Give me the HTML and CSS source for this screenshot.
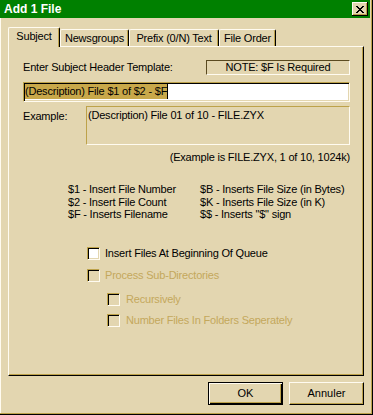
FILE: index.html
```html
<!DOCTYPE html>
<html lang="fr">
<head>
    <meta charset="UTF-8">
    <meta name="viewport" content="width=device-width, initial-scale=1.0">
    <title>Add 1 File</title>
    <link rel="stylesheet" href="styles.css">
</head>
<body>
    <div class="fenetre">
        <div class="titre">
            <span class="titre-texte">Add 1 File</span>
            <button class="fermer" type="button">
                <svg width="8" height="7" viewBox="0 0 8 7" shape-rendering="crispEdges">
                    <path fill="#000" d="M0 0h2v1h-2z M6 0h2v1h-2z M1 1h2v1h-2z M5 1h2v1h-2z M2 2h4v1h-4z M3 3h2v1h-2z M2 4h4v1h-4z M1 5h2v1h-2z M5 5h2v1h-2z M0 6h2v1h-2z M6 6h2v1h-2z"/>
                </svg>
            </button>
        </div>

        <div class="contenu">
            <!-- Onglets -->
            <div class="onglets">
                <div class="onglet actif onglet-subject">Subject</div>
                <div class="onglet onglet-news">Newsgroups</div>
                <div class="onglet onglet-prefix">Prefix (0/N) Text</div>
                <div class="onglet onglet-ordre">File Order</div>
            </div>

            <div class="panneau">
                <div class="ligne-modele">
                    <span>Enter Subject Header Template:</span>
                    <span class="note">NOTE: $F Is Required</span>
                </div>

                <div class="champ"><span class="selection">(Description) File $1 of $2 - $F</span><span class="curseur"></span></div>

                <div class="ligne-exemple">
                    <span class="etiquette-exemple">Example:</span>
                    <div class="boite-exemple">(Description) File 01 of 10 - FILE.ZYX</div>
                </div>
                <div class="note-exemple">(Example is FILE.ZYX, 1 of 10, 1024k)</div>

                <!-- Aide pour les variables -->
                <div class="aide">
                    <span>$1 - Insert File Number</span>
                    <span>$B - Inserts File Size (in Bytes)</span>
                    <span>$2 - Insert File Count</span>
                    <span>$K - Inserts File Size (in K)</span>
                    <span>$F - Inserts Filename</span>
                    <span>$$ - Inserts "$" sign</span>
                </div>

                <label class="case case-1">
                    <span class="boite"></span>
                    <span>Insert Files At Beginning Of Queue</span>
                </label>
                <label class="case case-2 inactif">
                    <span class="boite"></span>
                    <span>Process Sub-Directories</span>
                </label>
                <label class="case case-3 inactif sous">
                    <span class="boite"></span>
                    <span>Recursively</span>
                </label>
                <label class="case case-4 inactif sous">
                    <span class="boite"></span>
                    <span>Number Files In Folders Seperately</span>
                </label>
            </div>

            <div class="boutons">
                <button class="bouton defaut" type="button">OK</button>
                <button class="bouton" type="button">Annuler</button>
            </div>
        </div>
    </div>
</body>
</html>
```

FILE: styles.css
```css
body {
    margin: 0;
    background-color: #e3d6b0;
    font-family: "Liberation Sans", Arial, sans-serif;
    font-size: 11px;
    letter-spacing: -0.2px;
    line-height: 13px;
    color: #000;
}

.fenetre {
    width: 373px;
    height: 415px;
    box-sizing: border-box;
    border-right: 1px solid #000;
    border-bottom: 1px solid #000;
    box-shadow: inset -1px -1px #bda24a, inset 1px 0 #fffbf0;
    padding-right: 2px;
}

/* Barre de titre */
.titre {
    height: 18px;
    background-color: #008000;
    display: flex;
    align-items: center;
    justify-content: space-between;
    padding: 0 2px 0 4px;
}

.titre-texte {
    color: #fff;
    font-weight: bold;
    font-size: 12px;
    letter-spacing: 0;
    padding-top: 1px;
}

.fermer {
    width: 16px;
    height: 14px;
    padding: 0;
    border: none;
    background-color: #e3d6b0;
    box-shadow: inset -1px -1px #000, inset 1px 1px #fffbf0, inset -2px -2px #bda24a;
    display: flex;
    align-items: center;
    justify-content: center;
}

.contenu {
    padding: 9px 0 0 8px;
}

/* Onglets */
.onglets {
    display: flex;
    align-items: flex-end;
    height: 20px;
    margin-bottom: -1px;
    position: relative;
    z-index: 1;
}

.onglet {
    box-sizing: border-box;
    height: 17px;
    margin-bottom: 1px;
    padding-top: 2px;
    text-align: center;
    border-left: 1px solid #fffbf0;
    border-top: 1px solid #fffbf0;
    border-right: 1px solid #000;
    border-radius: 2px 2px 0 0;
    box-shadow: inset -1px 0 #bda24a;
    background-color: #e3d6b0;
}

.onglet.actif {
    height: 20px;
    margin-bottom: 0;
}

.onglet-subject { width: 52px; }
.onglet-news { width: 69px; }
.onglet-prefix { width: 90px; }
.onglet-ordre { width: 57px; }

/* Panneau */
.panneau {
    width: 356px;
    height: 330px;
    box-sizing: border-box;
    border-left: 1px solid #fffbf0;
    border-top: 1px solid #fffbf0;
    border-right: 1px solid #000;
    border-bottom: 1px solid #000;
    box-shadow: inset -1px -1px #bda24a;
    padding: 13px 13px 0 14px;
}

.ligne-modele {
    display: flex;
    justify-content: space-between;
    align-items: center;
    height: 15px;
}

.note {
    width: 144px;
    height: 15px;
    box-sizing: border-box;
    border: 1px solid;
    border-color: #5a4a20 #fffbf0 #fffbf0 #5a4a20;
    text-align: center;
}

.champ {
    margin-top: 7px;
    height: 20px;
    box-sizing: border-box;
    border: 1px solid;
    border-color: #bda24a #fffbf0 #fffbf0 #bda24a;
    box-shadow: inset 1px 1px #000, inset -1px -1px #e3d6b0;
    background-color: #fff;
    padding: 1px 0 0 1px;
    display: flex;
}

.selection {
    background-color: #c8a84a;
    height: 15px;
    line-height: 15px;
}

.curseur {
    width: 1px;
    height: 15px;
    background-color: #000;
}

.ligne-exemple {
    display: flex;
    margin-top: 4px;
}

.etiquette-exemple {
    width: 63px;
    padding-top: 4px;
}

.boite-exemple {
    flex: 1;
    height: 39px;
    box-sizing: border-box;
    border: 1px solid;
    border-color: #bda24a #fffbf0 #fffbf0 #bda24a;
    padding: 2px 1px;
}

.note-exemple {
    margin-top: 6px;
    text-align: right;
}

.aide {
    margin-top: 19px;
    height: 38px;
    padding-left: 45px;
    display: grid;
    grid-template-columns: 132px 1fr;
    line-height: 12.5px;
}

/* Cases à cocher */
.case {
    display: flex;
    align-items: center;
    gap: 5px;
    height: 13px;
    padding-left: 64px;
}

.case.sous {
    padding-left: 84px;
    gap: 6px;
}

.case-1 { margin-top: 26px; }
.case-2 { margin-top: 9px; }
.case-3 { margin-top: 11px; }
.case-4 { margin-top: 8px; }

.boite {
    width: 13px;
    height: 13px;
    box-sizing: border-box;
    border: 1px solid;
    border-color: #bda24a #fffbf0 #fffbf0 #bda24a;
    box-shadow: inset 1px 1px #000, inset -1px -1px #e3d6b0;
    background-color: #fff;
}

.inactif {
    color: #c4a85c;
}

.inactif .boite {
    background-color: #e3d6b0;
}

/* Boutons */
.boutons {
    width: 356px;
    margin-top: 6px;
    display: flex;
    justify-content: flex-end;
    gap: 6px;
}

.bouton {
    width: 75px;
    height: 23px;
    padding: 0;
    font: inherit;
    color: #000;
    background-color: #e3d6b0;
    border: 1px solid;
    border-color: #fffbf0 #000 #000 #fffbf0;
    box-shadow: inset -1px -1px #bda24a;
}

.bouton.defaut {
    border: 1px solid #000;
    box-shadow: inset 1px 1px #fffbf0, inset -1px -1px #000, inset -2px -2px #bda24a;
}
```
